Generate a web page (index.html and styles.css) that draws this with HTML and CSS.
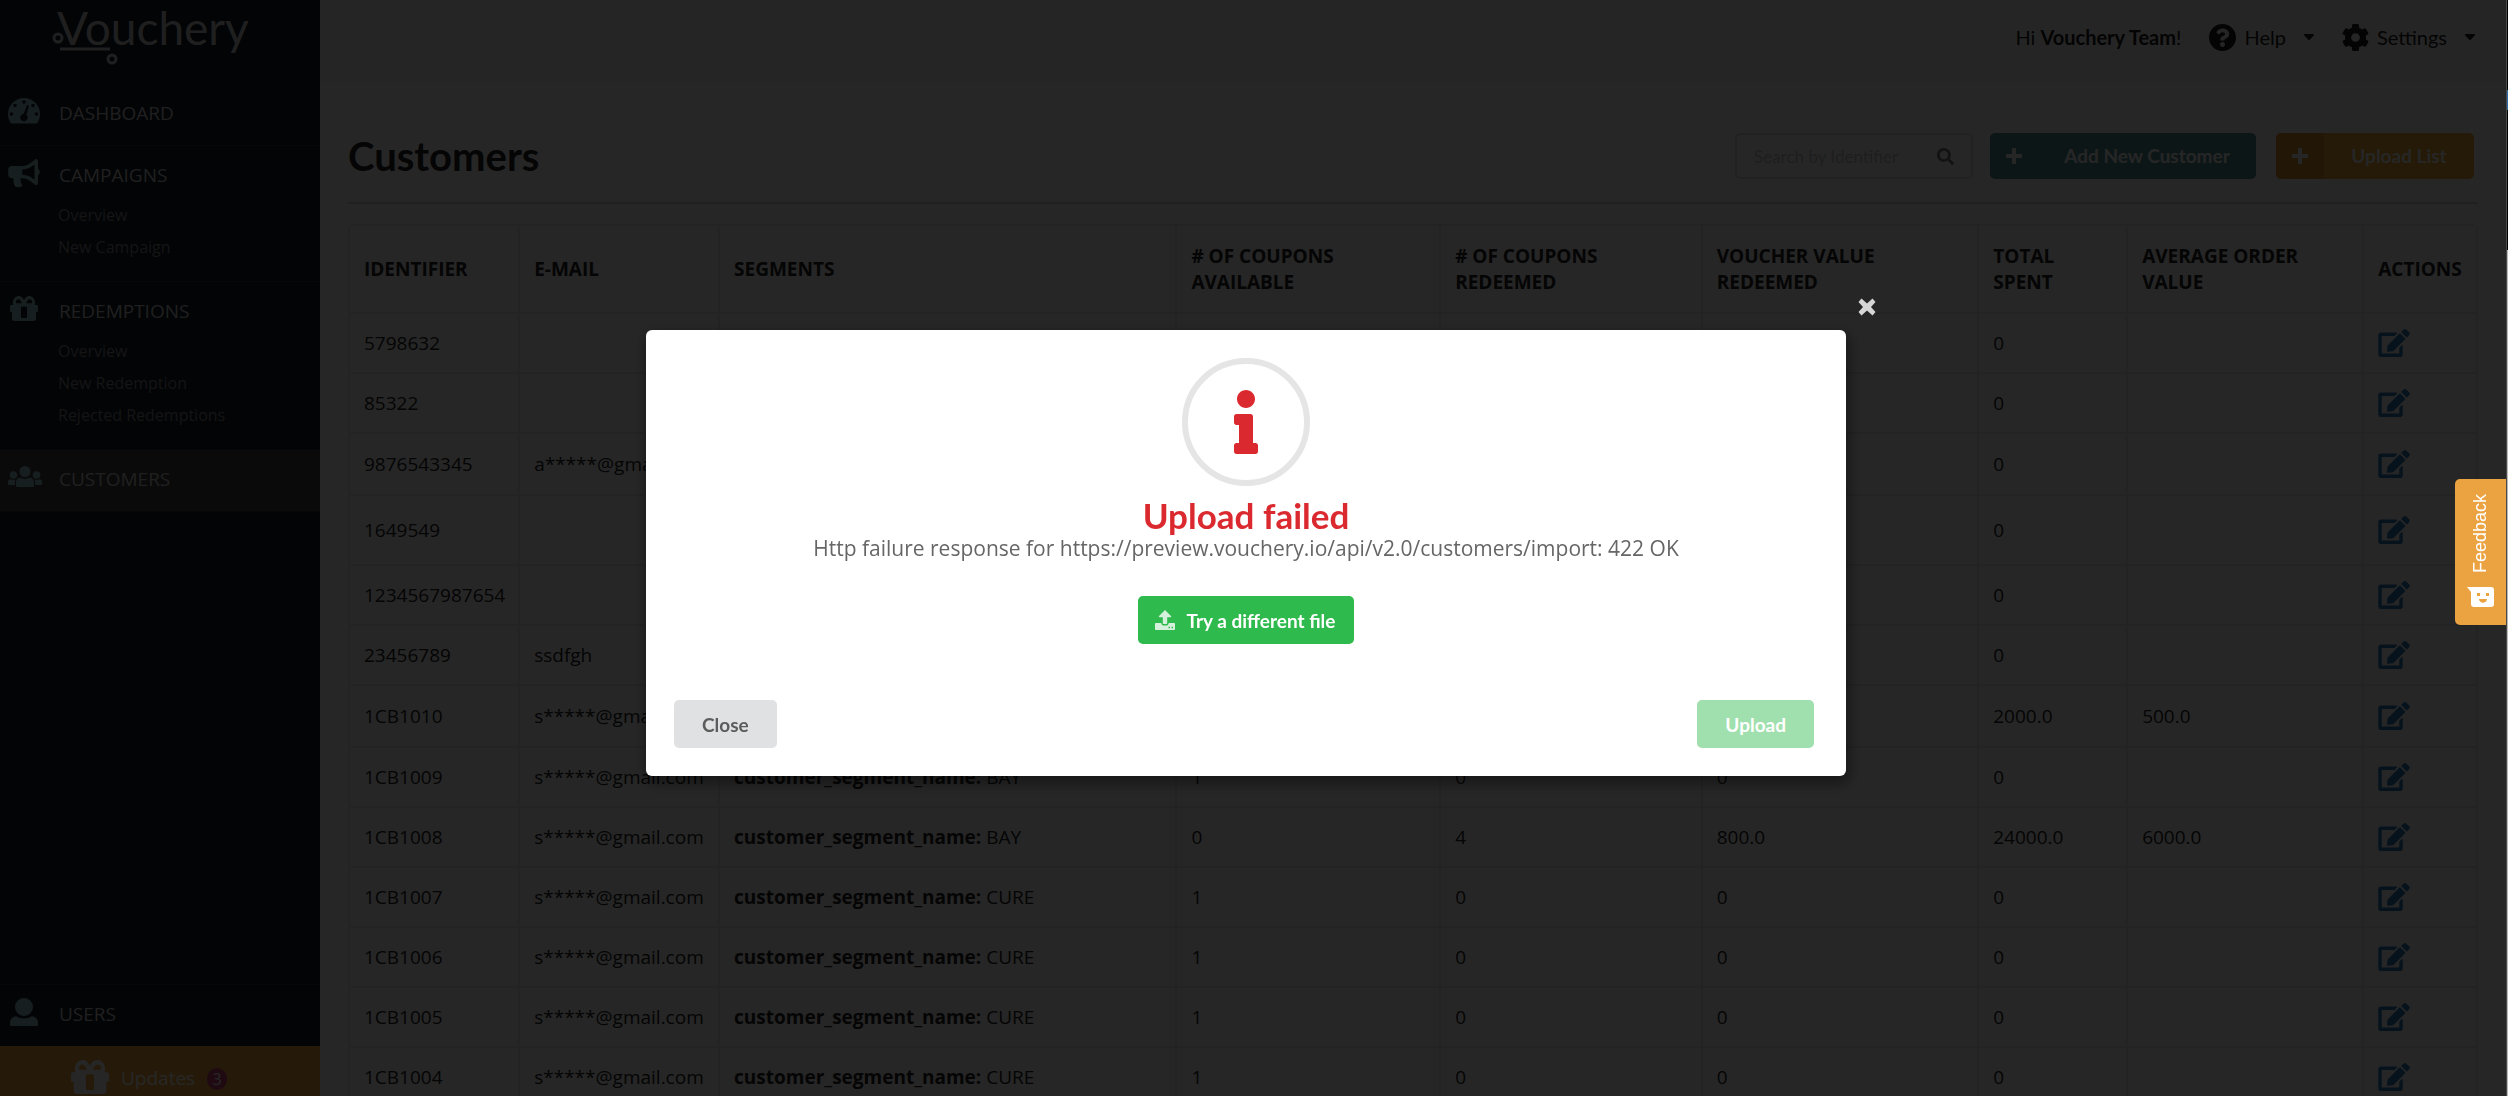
FILE: index.html
```html
<!DOCTYPE html>
<html lang="en">
<head>
  <meta charset="UTF-8" />
  <meta name="viewport" content="width=device-width, initial-scale=1" />
  <title>Vouchery - Customers</title>
  <link rel="stylesheet" href="styles.css">
</head>
<body>
  <svg class="sprite" aria-hidden="true">
    <symbol id="i-dashboard" viewBox="0 0 32 26">
      <path fill-rule="evenodd" d="M16 0a16 16 0 0 0-16 16c0 3 .8 5.700 2 8 .6 1.200 1.300 1.500 2.300 1.500h23.400c1 0 1.700-.3 2.300-1.500 1.200-2.300 2-5 2-8A16 16 0 0 0 16 0zM16 2.200a1.800 1.800 0 1 1 0 3.600 1.800 1.800 0 0 1 0-3.600zM7 5.700a1.800 1.800 0 1 1 0 3.600 1.800 1.800 0 0 1 0-3.600zM25 5.700a1.800 1.800 0 1 1 0 3.600 1.800 1.800 0 0 1 0-3.600zM3.500 14.200a1.800 1.800 0 1 1 0 3.600 1.800 1.800 0 0 1 0-3.600zM28.500 14.200a1.800 1.800 0 1 1 0 3.600 1.800 1.800 0 0 1 0-3.600zM19 7.200c.9-.5 2 .2 1.800 1.200l-2.400 8.300a3.700 3.700 0 1 1-2.700-.9z"/>
    </symbol>
    <symbol id="i-bullhorn" viewBox="0 0 576 512">
      <path d="M576 240c0-23.630-12.950-44.040-32-55.120V32.010C544 23.260 537.020 0 512 0c-7.120 0-14.190 2.380-19.980 7.020l-85.030 68.030C364.280 109.190 310.660 128 256 128H64c-35.350 0-64 28.650-64 64v96c0 35.350 28.650 64 64 64h33.700c-1.390 10.480-2.180 21.140-2.180 32 0 39.770 9.260 77.350 25.560 110.940 5.190 10.690 16.520 17.060 28.400 17.060h74.280c26.050 0 41.690-29.840 25.900-50.560-16.400-21.520-26.150-48.360-26.150-77.440 0-11.110 1.620-21.790 4.410-32H256c54.660 0 108.280 18.810 150.980 52.950l85.030 68.030a32.023 32.023 0 0 0 19.980 7.020c24.920 0 32-22.780 32-32V295.130C563.050 284.040 576 263.630 576 240zm-96 141.420l-33.050-26.440C392.950 311.780 325.120 288 256 288v-96c69.120 0 136.950-23.780 190.950-66.980L480 98.580v282.840z"/>
    </symbol>
    <symbol id="i-gift" viewBox="0 0 28 25">
      <path fill-rule="evenodd" d="M3.200 9C2 3.500 5 0 8.600 0 11.300 0 12.800 2 14 4c1.200-2 2.700-4 5.400-4 3.600 0 6.600 3.500 5.400 9H26.500c1 0 1.500.5 1.500 1.500V15c0 .6-.4 1-1 1h-1v7c0 1.200-.8 2-2 2H4c-1.200 0-2-.8-2-2v-7H1c-.6 0-1-.4-1-1v-4.500C0 9.500.5 9 1.500 9zM8.400 3.200C6.600 3.200 5.600 4.700 6 6.400l.2.800h5.600C11 5 10 3.200 8.400 3.200zM19.600 3.200C18 3.200 17 5 16.200 7.200h5.600l.2-.8c.4-1.700-.6-3.200-2.400-3.200zM12 10.500c-.6 0-1 .4-1 1V21c0 .6.4 1 1 1h4c.6 0 1-.4 1-1v-9.500c0-.6-.4-1-1-1z"/>
    </symbol>
    <symbol id="i-users" viewBox="0 0 34 21">
      <circle cx="17" cy="5.500" r="5.500"/><circle cx="5.500" cy="9" r="3.800"/><circle cx="28.500" cy="9" r="3.800"/>
      <path d="M12.500 11.800c2.800 1.500 6.200 1.500 9 0 2.800 0 4.500 2 4.500 4.700v3c0 1-.5 1.500-1.500 1.500h-15C8.500 21 8 20.500 8 19.500v-3c0-2.700 1.700-4.700 4.500-4.700zM0 15.500C0 14 1 13 2.500 13.200c1.500.7 3 .8 4.800.3C6.800 15 6.800 17 7 19H1c-.6 0-1-.4-1-1zM34 15.500c0-1.500-1-2.500-2.500-2.300-1.500.7-3 .8-4.800.3.500 1.500.5 3.500.3 5.500h6c.6 0 1-.4 1-1z"/>
    </symbol>
    <symbol id="i-user" viewBox="0 0 28 28">
      <circle cx="14" cy="9" r="9"/>
      <path d="M6 18.200c5 2.900 11 2.900 16 0 4 .5 6 3.200 6 6.800v1.500c0 1-.5 1.500-1.500 1.500h-25C.5 28 0 27.500 0 26.500V25c0-3.600 2-6.300 6-6.800z"/>
    </symbol>
    <symbol id="i-help" viewBox="8 8 496 496">
      <path d="M504 256c0 136.997-111.043 248-248 248S8 392.997 8 256C8 119.083 119.043 8 256 8s248 111.083 248 248zM262.655 90c-54.497 0-89.255 22.957-116.549 63.758-3.536 5.286-2.353 12.415 2.715 16.258l34.699 26.310c5.205 3.947 12.621 3.008 16.665-2.122 17.864-22.658 30.113-35.797 57.303-35.797 20.429 0 45.698 13.148 45.698 32.958 0 14.976-12.363 22.667-32.534 33.976C247.128 238.528 216 254.941 216 296v4c0 6.627 5.373 12 12 12h56c6.627 0 12-5.373 12-12v-1.333c0-28.462 83.186-29.647 83.186-106.667 0-58.002-60.165-102-116.531-102zM256 338c-25.365 0-46 20.635-46 46 0 25.364 20.635 46 46 46s46-20.636 46-46c0-25.365-20.635-46-46-46z"/>
    </symbol>
    <symbol id="i-cog" viewBox="8 8 496 496">
      <path d="M487.400 315.700l-42.600-24.600c4.300-23.200 4.300-47 0-70.200l42.600-24.600c4.900-2.800 7.100-8.600 5.500-14-11.100-35.600-30-67.800-54.700-94.600-3.800-4.100-10-5.100-14.800-2.300L380.800 110c-17.900-15.400-38.500-27.300-60.800-35.100V25.800c0-5.600-3.900-10.500-9.400-11.700-36.700-8.200-74.300-7.800-109.200 0-5.500 1.200-9.400 6.100-9.400 11.700V75c-22.200 7.900-42.800 19.800-60.800 35.100L88.700 85.500c-4.900-2.800-11-1.900-14.800 2.300-24.700 26.700-43.600 58.900-54.700 94.600-1.700 5.400.6 11.200 5.500 14L67.300 221c-4.300 23.200-4.300 47 0 70.200l-42.600 24.600c-4.900 2.800-7.100 8.600-5.500 14 11.100 35.600 30 67.800 54.700 94.600 3.800 4.100 10 5.100 14.800 2.300l42.600-24.600c17.900 15.400 38.500 27.300 60.800 35.100v49.200c0 5.600 3.900 10.500 9.400 11.700 36.700 8.200 74.300 7.800 109.200 0 5.500-1.200 9.400-6.100 9.400-11.700v-49.200c22.200-7.900 42.800-19.800 60.800-35.100l42.600 24.600c4.900 2.800 11 1.900 14.800-2.300 24.700-26.700 43.600-58.900 54.700-94.600 1.500-5.500-.7-11.300-5.600-14.100zM256 336c-44.100 0-80-35.900-80-80s35.900-80 80-80 80 35.900 80 80-35.900 80-80 80z"/>
    </symbol>
    <symbol id="i-search" viewBox="0 0 512 512">
      <path d="M505 442.700L405.300 343c-4.500-4.500-10.600-7-17-7H372c27.600-35.300 44-79.700 44-128C416 93.100 322.900 0 208 0S0 93.100 0 208s93.100 208 208 208c48.300 0 92.700-16.400 128-44v16.300c0 6.400 2.500 12.500 7 17l99.700 99.700c9.400 9.400 24.600 9.400 33.900 0l28.300-28.300c9.400-9.400 9.400-24.600.1-34zM208 336c-70.700 0-128-57.200-128-128 0-70.700 57.200-128 128-128 70.700 0 128 57.200 128 128 0 70.700-57.200 128-128 128z"/>
    </symbol>
    <symbol id="i-plus" viewBox="0 0 16 16">
      <path d="M6 1c0-.6.4-1 1-1h2c.6 0 1 .4 1 1v5h5c.6 0 1 .4 1 1v2c0 .6-.4 1-1 1h-5v5c0 .6-.4 1-1 1H7c-.6 0-1-.4-1-1v-5H1c-.6 0-1-.4-1-1V7c0-.6.4-1 1-1h5z"/>
    </symbol>
    <symbol id="i-edit" viewBox="0 0 576 512">
      <path d="M402.600 83.200l90.200 90.200c3.800 3.800 3.800 10 0 13.800L274.400 405.600l-92.800 10.300c-12.400 1.400-22.900-9.100-21.500-21.500l10.300-92.800L388.800 83.200c3.800-3.800 10-3.800 13.800 0zm162-22.900l-48.800-48.800c-15.200-15.200-39.900-15.200-55.200 0l-35.400 35.400c-3.800 3.800-3.800 10 0 13.800l90.200 90.200c3.800 3.800 10 3.800 13.800 0l35.400-35.400c15.200-15.300 15.200-40 0-55.200zM384 346.200V448H64V128h229.800c3.200 0 6.200-1.300 8.500-3.500l40-40c7.600-7.600 2.200-20.500-8.500-20.500H48C21.500 64 0 85.500 0 112v352c0 26.500 21.500 48 48 48h352c26.500 0 48-21.500 48-48V306.200c0-10.700-12.900-16-20.500-8.500l-40 40c-2.200 2.300-3.500 5.300-3.500 8.500z"/>
    </symbol>
    <symbol id="i-info" viewBox="0 0 192 512">
      <path d="M20 424.229h20V279.771H20c-11.046 0-20-8.954-20-20V212c0-11.046 8.954-20 20-20h112c11.046 0 20 8.954 20 20v212.229h20c11.046 0 20 8.954 20 20V492c0 11.046-8.954 20-20 20H20c-11.046 0-20-8.954-20-20v-47.771c0-11.046 8.954-20 20-20zM96 0C56.235 0 24 32.235 24 72s32.235 72 72 72 72-32.235 72-72S135.764 0 96 0z"/>
    </symbol>
    <symbol id="i-upload" viewBox="0 0 20 20">
      <path fill-rule="evenodd" d="M10 0l6 6c.5.6.2 1.200-.5 1.200h-3.300V13c0 .6-.4 1-1 1H8.800c-.6 0-1-.4-1-1V7.200H4.500C3.800 7.200 3.500 6.600 4 6zM1 13h5.200c.3 1.600 1.400 2.600 2.600 2.600h2.400c1.200 0 2.300-1 2.600-2.600H19c.6 0 1 .4 1 1v5c0 .6-.4 1-1 1H1c-.6 0-1-.4-1-1v-5c0-.6.4-1 1-1zM13.500 16.800v1.400H15v-1.400zM16.500 16.800v1.400H18v-1.400z"/>
    </symbol>
    <symbol id="i-close" viewBox="0 0 18 18">
      <path d="M3.500.5L9 5.500l5.500-5L17.500 4 13 9l4.500 5-3 3.500-5.500-5-5.500 5-3-3.500L5 9 .5 4z"/>
    </symbol>
    <symbol id="i-caret" viewBox="0 0 10 6">
      <path d="M1 0h8c.9 0 1.300 1 .7 1.600L5.700 5.700a1 1 0 0 1-1.400 0l-4-4.100C-.3 1 .1 0 1 0z"/>
    </symbol>
    <symbol id="i-smile" viewBox="0 0 27 20">
      <path fill-rule="evenodd" d="M0 0h24c2 0 3 1 3 3v14c0 2-1 3-3 3H7c-2 0-3-1-3-3V5zM10 6v3h3V6zM19 6v3h3V6zM12 12c.5 5 7.500 5 8 0z"/>
    </symbol>
  </svg>

  <div class="app">
    <aside class="sidebar">
      <a href="#" class="logo">Vouchery
        <svg class="logo-line" viewBox="0 0 66 34" aria-hidden="true">
          <circle cx="6" cy="6" r="4"/><path d="M8 17h50"/><circle cx="60" cy="27" r="4"/>
        </svg>
      </a>
      <nav class="menu">
        <div class="menu-item">
          <a href="#" class="menu-title"><span class="menu-icon"><svg width="32" height="26"><use href="#i-dashboard"/></svg></span>DASHBOARD</a>
        </div>
        <div class="menu-item with-sub">
          <a href="#" class="menu-title"><span class="menu-icon"><svg width="32" height="28"><use href="#i-bullhorn"/></svg></span>CAMPAIGNS</a>
          <a href="#" class="sub">Overview</a>
          <a href="#" class="sub">New Campaign</a>
        </div>
        <div class="menu-item with-sub">
          <a href="#" class="menu-title"><span class="menu-icon"><svg width="28" height="25"><use href="#i-gift"/></svg></span>REDEMPTIONS</a>
          <a href="#" class="sub">Overview</a>
          <a href="#" class="sub">New Redemption</a>
          <a href="#" class="sub">Rejected Redemptions</a>
        </div>
        <div class="menu-item active">
          <a href="#" class="menu-title"><span class="menu-icon"><svg width="34" height="21"><use href="#i-users"/></svg></span>CUSTOMERS</a>
        </div>
        <div class="menu-item users">
          <a href="#" class="menu-title"><span class="menu-icon"><svg width="28" height="28"><use href="#i-user"/></svg></span>USERS</a>
        </div>
      </nav>
      <a href="#" class="updates"><svg width="38" height="34"><use href="#i-gift"/></svg>Updates <span class="count">3</span></a>
    </aside>

    <div class="page">
      <header class="topbar">
        <span class="hello">Hi <b>Vouchery Team</b>!</span>
        <button class="top-menu"><svg width="27" height="27"><use href="#i-help"/></svg>Help<svg class="caret" width="10" height="6"><use href="#i-caret"/></svg></button>
        <button class="top-menu"><svg width="27" height="27"><use href="#i-cog"/></svg>Settings<svg class="caret" width="10" height="6"><use href="#i-caret"/></svg></button>
      </header>
      <main class="content">
        <div class="heading">
          <h1>Customers</h1>
          <label class="search">
            <input type="text" placeholder="Search by Identifier" aria-label="Search by Identifier">
            <svg width="17" height="17"><use href="#i-search"/></svg>
          </label>
          <button class="labeled teal"><span class="plus"><svg width="16" height="16"><use href="#i-plus"/></svg></span><span class="text">Add New Customer</span></button>
          <button class="labeled orange"><span class="plus"><svg width="16" height="16"><use href="#i-plus"/></svg></span><span class="text">Upload List</span></button>
        </div>
        <table>
          <colgroup>
            <col class="c-id"><col class="c-mail"><col class="c-seg"><col class="c-avail"><col class="c-red">
            <col class="c-val"><col class="c-spent"><col class="c-avg"><col class="c-act">
          </colgroup>
          <thead>
            <tr>
              <th>IDENTIFIER</th>
              <th>E-MAIL</th>
              <th>SEGMENTS</th>
              <th># OF COUPONS<br>AVAILABLE</th>
              <th># OF COUPONS<br>REDEEMED</th>
              <th>VOUCHER VALUE<br>REDEEMED</th>
              <th>TOTAL<br>SPENT</th>
              <th>AVERAGE ORDER<br>VALUE</th>
              <th>ACTIONS</th>
            </tr>
          </thead>
          <tbody id="customers"></tbody>
        </table>
      </main>
    </div>
  </div>

  <div class="dimmer">
    <div class="modal" role="dialog" aria-labelledby="modalTitle">
      <button class="modal-close" aria-label="Close dialog"><svg width="18" height="18"><use href="#i-close"/></svg></button>
      <div class="modal-body">
        <div class="info"><svg width="24" height="64"><use href="#i-info"/></svg></div>
        <h2 id="modalTitle">Upload failed</h2>
        <p>Http failure response for https://preview.vouchery.io/api/v2.0/customers/import: 422 OK</p>
        <button class="btn green"><svg width="20" height="20"><use href="#i-upload"/></svg>Try a different file</button>
      </div>
      <div class="modal-actions">
        <button class="btn grey">Close</button>
        <button class="btn green" disabled>Upload</button>
      </div>
    </div>
  </div>

  <button class="feedback"><svg width="27" height="20"><use href="#i-smile"/></svg><span>Feedback</span></button>
  <div class="edge"></div>

  <script>
    const mail = "s*****@gmail.com";
    // id, e-mail, segment, available, redeemed, voucher value, spent, average, row class
    const customers = [
      ["5798632", "", "", "", "", "", "0", ""],
      ["85322", "", "", "", "", "", "0", ""],
      ["9876543345", "a*****@gmail.com", "", "", "", "", "0", "", "medium"],
      ["1649549", "", "", "", "", "", "0", "", "tall"],
      ["1234567987654", "", "", "", "", "", "0", ""],
      ["23456789", "ssdfgh", "", "", "", "", "0", ""],
      ["1CB1010", mail, "", "", "", "", "2000.0", "500.0", "medium"],
      ["1CB1009", mail, "BAY", "1", "0", "0", "0", ""],
      ["1CB1008", mail, "BAY", "0", "4", "800.0", "24000.0", "6000.0"],
      ["1CB1007", mail, "CURE", "1", "0", "0", "0", ""],
      ["1CB1006", mail, "CURE", "1", "0", "0", "0", ""],
      ["1CB1005", mail, "CURE", "1", "0", "0", "0", ""],
      ["1CB1004", mail, "CURE", "1", "0", "0", "0", ""]
    ];

    const tbody = document.getElementById("customers");
    customers.forEach(c => {
      const row = document.createElement("tr");
      if (c[8]) row.className = c[8];
      row.innerHTML = `
        <td>${c[0]}</td>
        <td>${c[1]}</td>
        <td>${c[2] ? `<b>customer_segment_name:</b> ${c[2]}` : ""}</td>
        <td>${c[3]}</td>
        <td>${c[4]}</td>
        <td>${c[5]}</td>
        <td>${c[6]}</td>
        <td>${c[7]}</td>
        <td><a href="#" class="edit" aria-label="Edit"><svg width="32" height="28"><use href="#i-edit"/></svg></a></td>
      `;
      tbody.appendChild(row);
    });
  </script>
</body>
</html>
```
FILE: styles.css
```css
* {
  box-sizing: border-box;
}
body {
  margin: 0;
  font-family: "Open Sans", "Noto Sans", sans-serif;
  font-size: 19px;
  color: #222;
  background: #fff;
}
svg {
  fill: currentColor;
  flex: none;
}
a {
  color: inherit;
  text-decoration: none;
}
button {
  border: none;
  padding: 0;
  background: none;
  color: inherit;
  font: inherit;
  cursor: pointer;
}
.sprite {
  position: absolute;
  width: 0;
  height: 0;
}
.app {
  display: flex;
  height: 100vh;
  overflow: hidden;
}

/* sidebar */
.sidebar {
  width: 320px;
  flex: none;
  display: flex;
  flex-direction: column;
  background: #141b28;
  color: #d2d2d2;
}
.logo {
  position: relative;
  height: 84px;
  padding-left: 57px;
  font-family: Lato, sans-serif;
  font-size: 46px;
  line-height: 56px;
}
.logo-line {
  position: absolute;
  left: 52px;
  top: 32px;
  width: 66px;
  height: 34px;
  fill: none;
  stroke: currentColor;
  stroke-width: 3;
}
.menu {
  flex: 1;
  display: flex;
  flex-direction: column;
}
.menu-item {
  padding-bottom: 8px;
  border-bottom: 1px solid #2c323e;
}
.menu-item.with-sub {
  padding-bottom: 18px;
}
.menu-item.active {
  background: #434343;
}
.menu-item.users {
  margin-top: auto;
  border-top: 1px solid #2c323e;
  border-bottom: none;
}
.menu-title {
  display: flex;
  height: 53px;
  padding: 4px 0 0 8px;
  align-items: center;
}
.menu-icon {
  display: flex;
  width: 51px;
  padding-bottom: 4px;
  color: #9cc8cc;
}
.menu-icon svg[width="28"] {
  margin-left: 2px;
}
.sub {
  display: block;
  padding-left: 58px;
  font-size: 16px;
  line-height: 32px;
  color: #888;
}
.updates {
  display: flex;
  height: 50px;
  padding: 14px 0 0 71px;
  gap: 12px;
  background: #f7ad3c;
  color: #fff;
  line-height: 36px;
}
.count {
  width: 20px;
  height: 22px;
  margin-top: 8px;
  border-radius: 11px;
  background: #cf4870;
  font-size: 16px;
  line-height: 22px;
  text-align: center;
}

/* top bar */
.page {
  flex: 1;
  min-width: 0;
}
.topbar {
  display: flex;
  justify-content: flex-end;
  align-items: center;
  height: 82px;
  padding: 0 33px 8px 0;
  background: #f8f8f8;
  font-family: Lato, sans-serif;
  font-size: 20px;
  color: #1b1c1d;
}
.top-menu {
  display: flex;
  align-items: center;
  gap: 8px;
  margin-left: 28px;
}
.caret {
  margin-left: 10px;
}

/* content */
.content {
  padding: 0 30px 0 28px;
}
.heading {
  display: flex;
  align-items: center;
  height: 122px;
  margin-bottom: 20px;
  padding: 32px 4px 4px 0;
  border-bottom: 2px solid #d4d4d5;
}
h1 {
  flex: 1;
  margin: 0;
  font-family: Lato, sans-serif;
  font-size: 40px;
}
.search {
  display: flex;
  align-items: center;
  width: 238px;
  height: 46px;
  margin-right: 17px;
  padding: 0 17px;
  border: 2px solid #dededf;
  border-radius: 5px;
}
.search input {
  flex: 1;
  min-width: 0;
  border: none;
  padding: 0;
  outline: none;
  font-family: Lato, sans-serif;
  font-size: 17px;
}
.search input::placeholder {
  color: #c7c7c7;
}
.search svg {
  color: #777;
}
.labeled {
  display: flex;
  height: 46px;
  border-radius: 5px;
  overflow: hidden;
  color: #fff;
  font-family: Lato, sans-serif;
  font-weight: 700;
  font-size: 19px;
  line-height: 46px;
  white-space: nowrap;
}
.labeled .plus {
  display: flex;
  align-items: center;
  justify-content: center;
  width: 48px;
  height: 46px;
}
.labeled .text {
  flex: 1;
  text-align: center;
}
.teal {
  width: 266px;
  margin-right: 20px;
  background: #569394;
}
.orange {
  width: 198px;
  background: #f2ab2e;
}
.orange .plus {
  background: #e39b2b;
}

table {
  width: 100%;
  table-layout: fixed;
  border: 2px solid #e6e6e6;
  border-right-width: 1px;
  border-radius: 6px;
  border-spacing: 0;
  line-height: 26px;
}
.c-id { width: 8%; }
.c-mail { width: 9.400%; }
.c-seg { width: 21.500%; }
.c-avail { width: 12.400%; }
.c-red { width: 12.300%; }
.c-val { width: 13%; }
.c-spent { width: 7%; }
.c-avg { width: 11.100%; }
.c-act { width: 5.300%; }
th, td {
  height: 60px;
  padding: 0 14px;
  border-right: 2px solid #e9e9e9;
  border-bottom: 2px solid #e9e9e9;
  text-align: left;
  white-space: nowrap;
}
th {
  height: 88px;
  background: #fafafa;
}
th:last-child, td:last-child {
  border-right-width: 1px;
}
.medium td {
  height: 62px;
}
.tall td {
  height: 70px;
}
.edit {
  display: flex;
  color: #2c7fbe;
}

/* modal */
.dimmer {
  position: fixed;
  inset: 0;
  display: flex;
  align-items: center;
  justify-content: center;
  padding: 10px 16px 0 0;
  background: rgba(0, 0, 0, 0.85);
}
.modal {
  position: relative;
  width: 1200px;
  padding: 28px 32px 28px 28px;
  border-radius: 6px;
  background: #fff;
  box-shadow: 2px 6px 14px 2px rgba(0, 0, 0, 0.4);
}
.modal-close {
  position: absolute;
  top: -32px;
  right: -30px;
  height: 18px;
  line-height: 0;
  color: #d6d6d6;
}
.modal-body {
  display: flex;
  flex-direction: column;
  align-items: center;
  padding-left: 4px;
}
.info {
  display: flex;
  align-items: center;
  justify-content: center;
  width: 128px;
  height: 128px;
  border: 6px solid #e5e5e5;
  border-radius: 50%;
  color: #db2a2f;
}
.modal h2 {
  margin: 10px 0 0;
  font-family: Lato, sans-serif;
  font-size: 35px;
  line-height: 38px;
  color: #db2a2f;
}
.modal p {
  margin: 0 0 34px;
  font-size: 21px;
  line-height: 28px;
  color: #666;
}
.btn {
  display: flex;
  align-items: center;
  gap: 12px;
  height: 48px;
  padding: 0 28px;
  border-radius: 5px;
  font-family: Lato, sans-serif;
  font-weight: 700;
  font-size: 19px;
}
.btn.green {
  background: #2eba4c;
  color: #fff;
}
.btn.grey {
  background: #e0e1e2;
  color: #5c5c5c;
}
.btn:disabled {
  opacity: 0.45;
}
.btn svg {
  opacity: 0.8;
}
.modal-body .btn {
  padding: 0 19px 0 17px;
}
.modal-actions {
  display: flex;
  justify-content: space-between;
  margin-top: 56px;
}

.feedback {
  position: fixed;
  right: 2px;
  top: 479px;
  display: flex;
  flex-direction: column-reverse;
  align-items: center;
  justify-content: space-between;
  width: 51px;
  height: 146px;
  padding: 15px 0 18px;
  border-radius: 5px 0 0 5px;
  background: #eba342;
  color: #fff;
  font-family: "Liberation Sans", sans-serif;
  font-size: 18px;
}
.feedback span {
  writing-mode: vertical-rl;
  transform: rotate(180deg);
}
.edge {
  position: fixed;
  top: 0;
  right: 0;
  bottom: 0;
  width: 2px;
  border-left: 1px solid #4a4a4a;
  background: linear-gradient(#000 90px, #2a6cab 90px, #2a6cab 110px, #000 110px, #000 250px, #b8b8b8 250px);
}
```
